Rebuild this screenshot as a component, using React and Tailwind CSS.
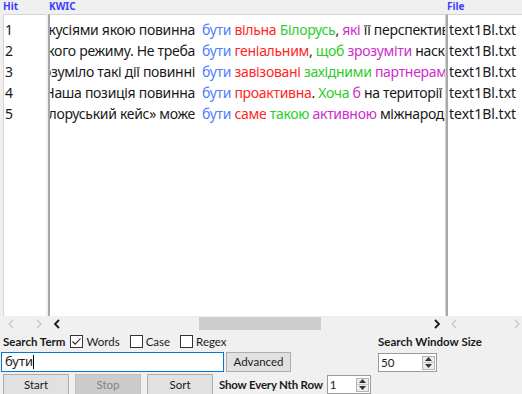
import React from 'react';

const rows = [
    {
        left: 'обговореннями з дискусіями якою повинна',
        right: [
            ['вільна', 'r'], [' ', 'k'], ['Білорусь', 'g'], [', ', 'k'], ['які', 'm'], [' її перспективи розвитку', 'k'],
        ],
    },
    {
        left: 'лукашенківського режиму. Не треба',
        right: [
            ['геніальним', 'r'], [', ', 'k'], ['щоб', 'g'], [' ', 'k'], ['зрозуміти', 'm'], [' наскільки', 'k'],
        ],
    },
    {
        left: 'Зрозуміло такі дії повинні',
        right: [
            ['завізовані', 'r'], [' ', 'k'], ['західними', 'g'], [' ', 'k'], ['партнерами', 'm'], [' України', 'k'],
        ],
    },
    {
        left: 'Наша позиція повинна',
        right: [
            ['проактивна', 'r'], ['. ', 'k'], ['Хоча', 'g'], [' ', 'k'], ['б', 'm'], [' на території Євросоюзу', 'k'],
        ],
    },
    {
        left: '«Білоруський кейс» може',
        right: [
            ['саме', 'r'], [' ', 'k'], ['такою', 'g'], [' ', 'k'], ['активною', 'm'], [' міжнародною', 'k'],
        ],
    },
];

const tone = {
    r: 'text-[#ff2626]',
    g: 'text-[#2ecc2e]',
    m: 'text-[#cc2ecc]',
    k: 'text-[#1a1a1a]',
};

function Checkbox({ checked, label }) {
    return (
        <label className="flex items-center gap-[3px]">
            <span className="w-[13px] h-[13px] border border-[#333] bg-white flex items-center justify-center">
                {checked && (
                    <svg width="11" height="11" viewBox="0 0 11 11">
                        <path d="M1.5 5.5 L4.2 8.2 L9.5 2.5" fill="none" stroke="#222" strokeWidth="1.1" />
                    </svg>
                )}
            </span>
            <span>{label}</span>
        </label>
    );
}

function Spin({ value, width }) {
    return (
        <div className={`${width} h-[19px] shrink-0 bg-white border border-[#9a9a9a] flex items-center pl-[2px] pr-[1px]`}>
            <span className="flex-1 leading-none">{value}</span>
            <div className="w-[13px] h-[14px] border border-[#b5b5b5] bg-[#ececec] flex flex-col">
                <div className="flex-1 flex items-center justify-center border-b border-[#c8c8c8]">
                    <svg width="7" height="4" viewBox="0 0 7 4"><path d="M0 4 L3.5 0 L7 4Z" fill="#333" /></svg>
                </div>
                <div className="flex-1 flex items-center justify-center">
                    <svg width="7" height="4" viewBox="0 0 7 4"><path d="M0 0 L3.5 4 L7 0Z" fill="#333" /></svg>
                </div>
            </div>
        </div>
    );
}

function Chevron({ dir, dark }) {
    return (
        <svg width="8" height="10" viewBox="0 0 8 10">
            <path
                d={dir === 'l' ? 'M6 1 L2 5 L6 9' : 'M2 1 L6 5 L2 9'}
                fill="none"
                stroke={dark ? '#1a1a1a' : '#c4c4c4'}
                strokeWidth={dark ? 1.8 : 1.2}
            />
        </svg>
    );
}

function App() {
    return (
        <div className="w-[522px] h-[394px] bg-[#f0f0f0] flex flex-col overflow-hidden" style={{ fontFamily: '"Noto Sans", "Open Sans", sans-serif' }}>
            {/* Result columns */}
            <div className="flex h-[316px] shrink-0">
                {/* Hit */}
                <div className="w-[47px] flex flex-col pl-[3px] pr-[1px]">
                    <div className="h-[14px] text-[10px] font-bold leading-[13px] text-[#3d3dff]">Hit</div>
                    <div className="flex-1 bg-white border-t border-l border-[#d4d4d4] pt-[4px] pl-[1px]">
                        {rows.map((_, i) => (
                            <div key={i} className="h-[21px] text-[14px] leading-[21px] text-[#1a1a1a]">{i + 1}</div>
                        ))}
                    </div>
                </div>

                {/* KWIC */}
                <div className="w-[399px] flex flex-col pl-[1px]">
                    <div className="h-[14px] text-[10px] font-bold leading-[13px] text-[#3d3dff] pl-[1px]">KWIC</div>
                    <div className="flex-1 bg-white border-t border-[#d4d4d4] border-l-2 border-l-[#a8a8a8] border-r border-r-[#d4d4d4] pt-[4px] overflow-hidden">
                        {rows.map((row, i) => (
                            <div key={i} className="h-[21px] text-[14px] leading-[21px] tracking-[-0.3px] flex whitespace-nowrap">
                                <div className="w-[145px] shrink-0 flex justify-end overflow-hidden text-[#1a1a1a]">
                                    <span>{row.left}</span>
                                </div>
                                <div className="overflow-hidden pl-[7px]">
                                    <span className="text-[#4f7dff]">бути</span>
                                    <span> </span>
                                    {row.right.map(([t, c], j) => (
                                        <span key={j} className={tone[c]}>{t}</span>
                                    ))}
                                </div>
                            </div>
                        ))}
                    </div>
                </div>

                {/* File */}
                <div className="flex-1 flex flex-col">
                    <div className="h-[14px] text-[10px] font-bold leading-[13px] text-[#3d3dff] pl-[1px]">File</div>
                    <div className="flex-1 bg-white border-t border-[#d4d4d4] border-l-2 border-l-[#a8a8a8] pt-[4px] pl-[1px] overflow-hidden">
                        {rows.map((_, i) => (
                            <div key={i} className="h-[21px] text-[14px] leading-[21px] text-[#1a1a1a] whitespace-nowrap">text1Bl.txt</div>
                        ))}
                    </div>
                </div>
            </div>

            {/* Scrollbars */}
            <div className="flex h-[15px] shrink-0 items-center">
                <div className="w-[47px] flex items-center justify-between pl-[7px] pr-[4px]">
                    <Chevron dir="l" />
                    <Chevron dir="r" />
                </div>
                <div className="w-[399px] flex items-center pl-[6px] pr-[5px]">
                    <Chevron dir="l" dark />
                    <div className="flex-1 h-[13px] flex items-center">
                        <div className="ml-[138px] w-[122px] h-[13px] bg-[#cdcdcd]" />
                    </div>
                    <Chevron dir="r" dark />
                </div>
                <div className="flex-1 flex items-center justify-between pl-[4px] pr-[1px]">
                    <Chevron dir="l" />
                    <Chevron dir="r" />
                </div>
            </div>

            {/* Controls */}
            <div className="flex-1 flex text-[11.5px] text-[#1a1a1a] whitespace-nowrap" style={{ fontFamily: 'Lato, "Noto Sans", sans-serif' }}>
                <div className="w-[376px] flex flex-col">
                    <div className="h-[21px] flex items-center pl-[3px] gap-[5px]">
                        <span className="font-bold">Search Term</span>
                        <div className="flex items-center gap-[10px]">
                            <Checkbox checked label="Words" />
                            <Checkbox label="Case" />
                            <Checkbox label="Regex" />
                        </div>
                    </div>
                    <div className="h-[21px] flex items-start gap-[2px] pl-[1px]">
                        <div className="w-[223px] h-[20px] bg-white border border-[#0078d7] flex items-center pl-[3px] text-[13px]" style={{ fontFamily: '"Noto Sans", sans-serif' }}>
                            <span>бути</span>
                            <span className="w-px h-[14px] bg-black" />
                        </div>
                        <button className="w-[65px] h-[20px] bg-[#e1e1e1] border border-[#adadad]">Advanced</button>
                    </div>
                    <div className="flex items-center pl-[3px] pt-[1px]">
                        <button className="w-[66px] h-[21px] bg-[#e1e1e1] border border-[#adadad]">Start</button>
                        <button className="ml-[6px] w-[66px] h-[21px] bg-[#cccccc] border border-[#bfbfbf] text-[#838383]">Stop</button>
                        <button className="ml-[6px] w-[66px] h-[21px] bg-[#e1e1e1] border border-[#adadad]">Sort</button>
                        <span className="ml-[6px] font-bold tracking-[-0.2px]">Show Every Nth Row</span>
                        <div className="ml-[4px]">
                            <Spin value="1" width="w-[44px]" />
                        </div>
                    </div>
                </div>
                <div className="flex flex-col pl-[2px]">
                    <div className="h-[21px] flex items-center font-bold">Search Window Size</div>
                    <div className="pt-[1px]">
                        <Spin value="50" width="w-[59px]" />
                    </div>
                </div>
            </div>
        </div>
    );
}

export default App;
